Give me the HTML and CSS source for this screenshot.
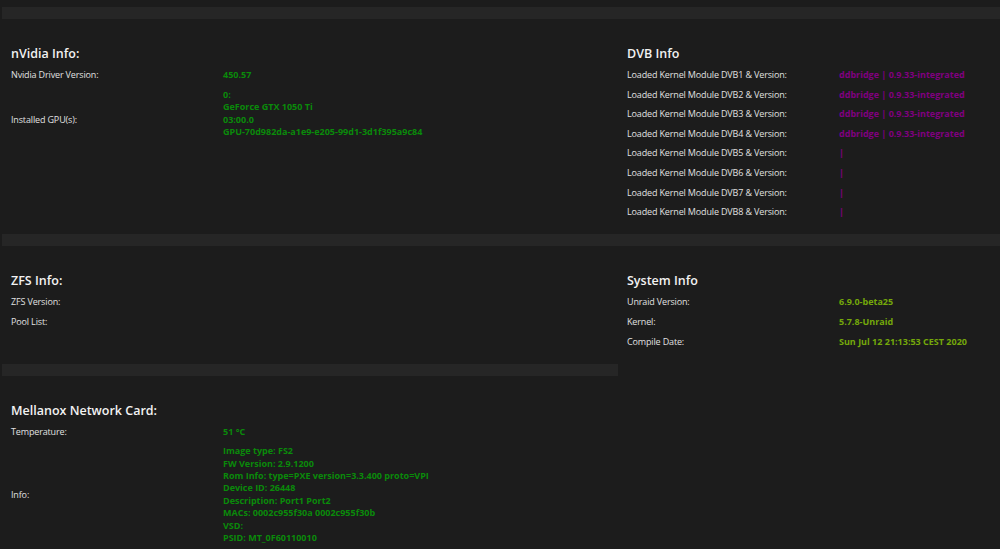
FILE: index.html
```html
<!DOCTYPE html>
<html>
<head>
<meta charset="utf-8">
<link rel="stylesheet" href="styles.css">
</head>
<body>
<div class="page">
  <section class="panel">
    <div class="bar"></div>
    <div class="body">
      <h2 class="title">nVidia Info:</h2>
      <div class="row"><span class="label">Nvidia Driver Version:</span><span class="val green">450.57</span></div>
      <div class="row"><span class="label">Installed GPU(s):</span><span class="val green">0:<br>GeForce GTX 1050 Ti<br>03:00.0<br>GPU-70d982da-a1e9-e205-99d1-3d1f395a9c84<br>&nbsp;</span></div>
    </div>
  </section>
  <section class="panel">
    <div class="bar"></div>
    <div class="body">
      <h2 class="title">DVB Info</h2>
      <div class="row"><span class="label">Loaded Kernel Module DVB1 &amp; Version:</span><span class="val purple">ddbridge | 0.9.33-integrated</span></div>
      <div class="row"><span class="label">Loaded Kernel Module DVB2 &amp; Version:</span><span class="val purple">ddbridge | 0.9.33-integrated</span></div>
      <div class="row"><span class="label">Loaded Kernel Module DVB3 &amp; Version:</span><span class="val purple">ddbridge | 0.9.33-integrated</span></div>
      <div class="row"><span class="label">Loaded Kernel Module DVB4 &amp; Version:</span><span class="val purple">ddbridge | 0.9.33-integrated</span></div>
      <div class="row"><span class="label">Loaded Kernel Module DVB5 &amp; Version:</span><span class="val purple">|</span></div>
      <div class="row"><span class="label">Loaded Kernel Module DVB6 &amp; Version:</span><span class="val purple">|</span></div>
      <div class="row"><span class="label">Loaded Kernel Module DVB7 &amp; Version:</span><span class="val purple">|</span></div>
      <div class="row"><span class="label">Loaded Kernel Module DVB8 &amp; Version:</span><span class="val purple">|</span></div>
    </div>
  </section>
  <section class="panel">
    <div class="bar"></div>
    <div class="body">
      <h2 class="title">ZFS Info:</h2>
      <div class="row"><span class="label">ZFS Version:</span><span class="val green"></span></div>
      <div class="row"><span class="label">Pool List:</span><span class="val green"></span></div>
    </div>
  </section>
  <section class="panel">
    <div class="bar"></div>
    <div class="body">
      <h2 class="title">System Info</h2>
      <div class="row"><span class="label">Unraid Version:</span><span class="val lime">6.9.0-beta25</span></div>
      <div class="row"><span class="label">Kernel:</span><span class="val lime">5.7.8-Unraid</span></div>
      <div class="row"><span class="label">Compile Date:</span><span class="val lime">Sun Jul 12 21:13:53 CEST 2020</span></div>
    </div>
  </section>
  <section class="panel">
    <div class="bar"></div>
    <div class="body">
      <h2 class="title">Mellanox Network Card:</h2>
      <div class="row"><span class="label">Temperature:</span><span class="val green">51 °C</span></div>
      <div class="row"><span class="label">Info:</span><span class="val green">Image type: FS2<br>FW Version: 2.9.1200<br>Rom Info: type=PXE version=3.3.400 proto=VPI<br>Device ID: 26448<br>Description: Port1 Port2<br>MACs: 0002c955f30a 0002c955f30b<br>VSD:<br>PSID: MT_0F60110010</span></div>
    </div>
  </section>
</div>
</body>
</html>
```

FILE: styles.css
```css
html, body {
  margin: 0;
  padding: 0;
  background: #1c1c1c;
}
body {
  font-family: "Open Sans", "Noto Sans", sans-serif;
  color: #e6e6e6;
  overflow: hidden;
}
.page {
  display: grid;
  grid-template-columns: 616px 1fr;
  padding: 7px 0 0 2px;
}
.bar {
  height: 12px;
  background: #262626;
}
.body {
  padding: 26px 9px 12px 9px;
}
.title {
  margin: 0 0 2.5px 0;
  font-size: 12.5px;
  line-height: 18px;
  font-weight: 600;
  color: #f2f2f2;
}
.row {
  display: grid;
  grid-template-columns: 212px 1fr;
  align-items: center;
  padding: 3.6px 0;
  font-size: 9px;
  line-height: 12.4px;
}
.label {
  color: #e0e0e0;
  letter-spacing: -0.15px;
}
.val {
  font-weight: 700;
}
.green { color: #0a8a0a; }
.purple { color: #800080; }
.lime { color: #74a80a; }
```
